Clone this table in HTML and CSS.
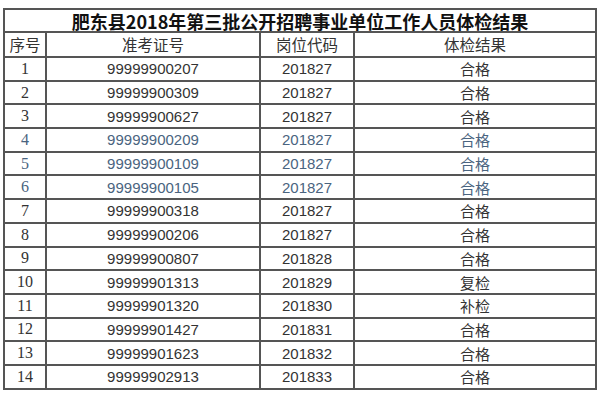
FILE: index.html
```html
<!DOCTYPE html>
<html lang="zh-CN">
<head>
<meta charset="utf-8">
<title>体检结果</title>
<link rel="stylesheet" href="styles.css">
</head>
<body>
<table class="result">
  <colgroup>
    <col class="c-no">
    <col class="c-id">
    <col class="c-code">
    <col class="c-res">
  </colgroup>
  <tr class="title-row"><td colspan="4" class="title">肥东县2018年第三批公开招聘事业单位工作人员体检结果</td></tr>
  <tr class="head-row">
    <td class="zh">序号</td><td class="zh">准考证号</td><td class="zh">岗位代码</td><td class="zh">体检结果</td>
  </tr>
  <tr><td class="no">1</td><td class="num">99999900207</td><td class="num">201827</td><td class="zh">合格</td></tr>
  <tr><td class="no">2</td><td class="num">99999900309</td><td class="num">201827</td><td class="zh">合格</td></tr>
  <tr><td class="no">3</td><td class="num">99999900627</td><td class="num">201827</td><td class="zh">合格</td></tr>
  <tr class="blue"><td class="no">4</td><td class="num">99999900209</td><td class="num">201827</td><td class="zh">合格</td></tr>
  <tr class="blue"><td class="no">5</td><td class="num">99999900109</td><td class="num">201827</td><td class="zh">合格</td></tr>
  <tr class="blue"><td class="no">6</td><td class="num">99999900105</td><td class="num">201827</td><td class="zh">合格</td></tr>
  <tr><td class="no">7</td><td class="num">99999900318</td><td class="num">201827</td><td class="zh">合格</td></tr>
  <tr><td class="no">8</td><td class="num">99999900206</td><td class="num">201827</td><td class="zh">合格</td></tr>
  <tr><td class="no">9</td><td class="num">99999900807</td><td class="num">201828</td><td class="zh">合格</td></tr>
  <tr><td class="no">10</td><td class="num">99999901313</td><td class="num">201829</td><td class="zh">复检</td></tr>
  <tr><td class="no">11</td><td class="num">99999901320</td><td class="num">201830</td><td class="zh">补检</td></tr>
  <tr><td class="no">12</td><td class="num">99999901427</td><td class="num">201831</td><td class="zh">合格</td></tr>
  <tr><td class="no">13</td><td class="num">99999901623</td><td class="num">201832</td><td class="zh">合格</td></tr>
  <tr><td class="no">14</td><td class="num">99999902913</td><td class="num">201833</td><td class="zh">合格</td></tr>
</table>
</body>
</html>
```

FILE: styles.css
```css
html, body {
  margin: 0;
  padding: 0;
  background: #ffffff;
}

body {
  padding: 8px 0 0 3px;
}

.result {
  border-collapse: collapse;
  table-layout: fixed;
  width: 592px;
  color: #333333;
}

.result td {
  border: 2px solid #555555;
  padding: 0;
  text-align: center;
  vertical-align: middle;
  line-height: 1;
  height: 21.7px;
  white-space: nowrap;
}

.c-no { width: 42px; }
.c-id { width: 214px; }
.c-code { width: 94px; }
.c-res { width: 242px; }

.result .title-row td { height: 21px; }
.result .head-row td { height: 23px; }

.title {
  font-family: "Noto Sans CJK SC", sans-serif;
  font-weight: 700;
  font-size: 18px;
  color: #111111;
}

.zh {
  font-family: "Noto Sans CJK SC", sans-serif;
  font-size: 15px;
}

.head-row .zh {
  font-size: 15.5px;
}

.num {
  font-family: "Liberation Sans", Arial, sans-serif;
  font-size: 15px;
}

.no {
  font-family: "Liberation Serif", "Times New Roman", serif;
  font-size: 16px;
}

.blue td {
  color: #4a6480;
}
```
